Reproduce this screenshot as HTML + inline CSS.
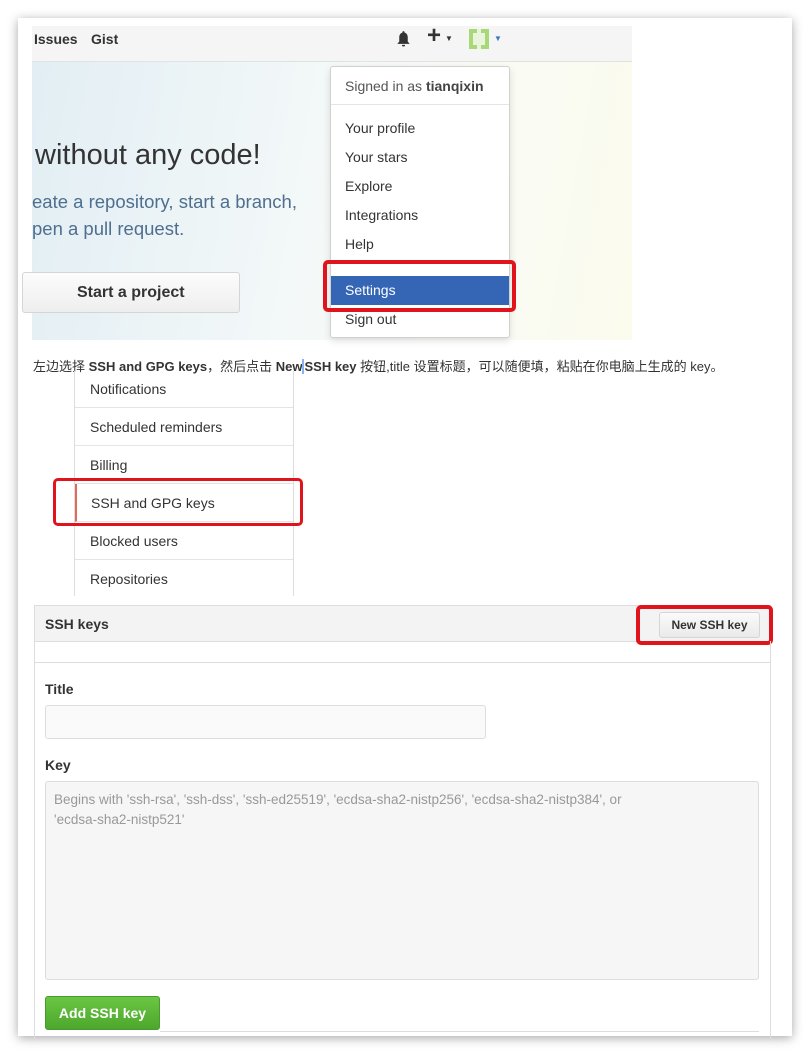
<!DOCTYPE html>
<html><head><meta charset="utf-8"><style>
*{box-sizing:border-box;margin:0;padding:0}
body{width:810px;height:1054px;background:#fff;position:relative;overflow:hidden;font-family:"Liberation Sans","Noto Sans CJK SC",sans-serif;color:#333}
.a{position:absolute}
.sheet{left:18px;top:18px;width:774px;height:1018px;background:#fff;box-shadow:0 2px 10px rgba(0,0,0,.35)}
.hero{left:32px;top:62px;width:600px;height:278px;background:linear-gradient(100deg,#e2eef4 0%,#f3f8f8 45%,#fafbf3 75%,#fbfbee 100%)}
.nav{left:32px;top:26px;width:600px;height:36px;background:#f5f5f5;border-bottom:1px solid #e2e2e2;font-size:14px;font-weight:bold;color:#333}
.dd{left:330px;top:66px;width:180px;height:272px;background:#fff;border:1px solid #d0d0d0;border-radius:3px;box-shadow:0 3px 8px rgba(0,0,0,.12);font-size:14px;color:#333}
.dd div{position:absolute;left:14px}
.red{border:4px solid #e0141c;border-radius:5px}
.menu{left:74px;top:371px;width:220px;height:225px;border-left:1px solid #ddd;border-right:1px solid #ddd;font-size:14px;color:#333}
.menu div{position:absolute;left:0;width:218px;height:38px;border-bottom:1px solid #e4e4e4;padding-left:15px;line-height:38px}
</style></head><body>
<div class="a sheet"></div>
<div class="a hero"></div>
<div class="a nav">
<span class="a" style="left:2px;top:5px">Issues</span><span class="a" style="left:59px;top:5px">Gist</span>
<svg class="a" style="left:363px;top:4px" width="17" height="17" viewBox="0 0 16 16"><path d="M8 1c-.6 0-1 .4-1 1v.5C5 3 4 4.7 4 7v4l-1.5 1.5V13h11v-.5L12 11V7c0-2.3-1-4-3-4.5V2c0-.6-.4-1-1-1zM6.5 14a1.5 1.5 0 003 0z" fill="#333"/></svg>
<span class="a" style="left:395px;top:-4px;font-size:24px">+</span><span class="a" style="left:413px;top:8px;font-size:8px">▼</span>
<svg class="a" style="left:437px;top:3px" width="20" height="20" viewBox="0 0 5 5"><rect width="5" height="5" fill="#a8d878"/><rect x="1" y="1" width="3" height="3" fill="#e8f4dc"/><rect x="2" y="0" width="1" height="1" fill="#e8f4dc"/><rect x="2" y="4" width="1" height="1" fill="#e8f4dc"/></svg>
<span class="a" style="left:462px;top:8px;font-size:8px;color:#4078c0">▼</span>
</div>
<div class="a" style="left:35px;top:139px;font-size:29px;color:#333">without any code!</div>
<div class="a" style="left:32px;top:188px;font-size:18.5px;color:#4f6f8f;line-height:27px">eate a repository, start a branch,<br>pen a pull request.</div>
<div class="a" style="left:22px;top:272px;width:218px;height:41px;background:linear-gradient(#fcfcfc,#eee);border:1px solid #d5d5d5;border-radius:3px;font-size:16px;font-weight:bold;line-height:40px;padding-left:54px;color:#333">Start a project</div>
<div class="a dd">
<div style="top:11px;color:#555">Signed in as <b style="color:#444">tianqixin</b></div>
<div style="left:0;top:37px;width:178px;border-top:1px solid #e5e5e5"></div>
<div style="top:53px">Your profile</div>
<div style="top:82px">Your stars</div>
<div style="top:111px">Explore</div>
<div style="top:140px">Integrations</div>
<div style="top:169px">Help</div>
<div style="left:0;top:209px;width:178px;height:29px;background:#3466b5"></div>
<div style="top:215px;color:#fff">Settings</div>
<div style="top:244px">Sign out</div>
</div>
<div class="a red" style="left:323px;top:260px;width:193px;height:52px"></div>
<div class="a" style="left:33px;top:356px;font-size:13px;color:#333;white-space:nowrap">左边选择 <b>SSH and GPG keys</b>，然后点击 <b>New<span style="border-left:2px solid #8ab4f0">SSH key</span></b> 按钮,title 设置标题，可以随便填，粘贴在你电脑上生成的 key。</div>
<div class="a menu">
<div style="top:0;height:37px;line-height:36px">Notifications</div>
<div style="top:37px">Scheduled reminders</div>
<div style="top:75px">Billing</div>
<div style="top:113px;border-left:2px solid #e36a5b;padding-left:14px">SSH and GPG keys</div>
<div style="top:151px">Blocked users</div>
<div style="top:189px;border-bottom:none">Repositories</div>
</div>
<div class="a red" style="left:53px;top:478px;width:250px;height:48px;border-width:3px"></div>
<div class="a" style="left:34px;top:605px;width:737px;height:37px;background:#f3f3f3;border:1px solid #ddd;font-size:14px;font-weight:bold;padding:10px 10px;color:#333">SSH keys</div>
<div class="a" style="left:659px;top:612px;width:101px;height:26px;background:linear-gradient(#fafafa,#eaeaea);border:1px solid #d5d5d5;border-radius:3px;font-size:12px;font-weight:bold;text-align:center;line-height:24px">New SSH key</div>
<div class="a red" style="left:636px;top:605px;width:137px;height:40px"></div>
<div class="a" style="left:34px;top:641px;width:737px;height:400px;border-left:1px solid #ddd;border-right:1px solid #ddd"></div>
<div class="a" style="left:34px;top:662px;width:737px;border-top:1px solid #ddd"></div>
<div class="a" style="left:45px;top:681px;font-size:14px;font-weight:bold">Title</div>
<div class="a" style="left:45px;top:705px;width:441px;height:34px;background:#fafafa;border:1px solid #ddd;border-radius:3px"></div>
<div class="a" style="left:45px;top:757px;font-size:14px;font-weight:bold">Key</div>
<div class="a" style="left:45px;top:781px;width:714px;height:199px;background:#f6f6f6;border:1px solid #ddd;border-radius:3px;font-size:13.5px;color:#999;padding:8px 8px;line-height:20px;white-space:nowrap">Begins with 'ssh-rsa', 'ssh-dss', 'ssh-ed25519', 'ecdsa-sha2-nistp256', 'ecdsa-sha2-nistp384', or<br>'ecdsa-sha2-nistp521'</div>
<div class="a" style="left:45px;top:996px;width:115px;height:34px;background:linear-gradient(#6cc644,#4ca72c);border:1px solid #4a9a2f;border-radius:3px;color:#fff;font-size:14px;font-weight:bold;text-align:center;line-height:32px">Add SSH key</div>
<div class="a" style="left:160px;top:1031px;width:599px;border-top:1px solid #ddd"></div>
</body></html>
